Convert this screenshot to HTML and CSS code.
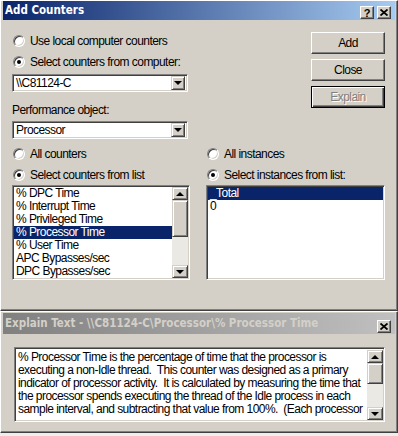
FILE: index.html
```html
<!DOCTYPE html>
<html lang="en">
<head>
    <meta charset="UTF-8">
    <title>Add Counters</title>
    <link rel="stylesheet" href="styles.css">
</head>
<body>
    <div class="window main">
        <div class="titlebar active">
            <span class="title">Add Counters</span>
            <span class="caption-btns">
                <span class="cap-btn">?</span>
                <span class="cap-btn"><svg width="8" height="7" viewBox="0 0 8 7"><path d="M0.5 0.5 L7.5 6.5 M7.5 0.5 L0.5 6.5" stroke="#000" stroke-width="1.8"/></svg></span>
            </span>
        </div>
        <div class="content">
            <div class="top">
                <div class="col-left">
                    <div class="radio-row"><span class="radio"></span>Use local computer counters</div>
                    <div class="radio-row"><span class="radio checked"></span>Select counters from computer:</div>
                    <div class="combo">
                        <span class="combo-text">\\C81124-C</span>
                        <span class="drop-btn"><i class="arrow-down"></i></span>
                    </div>
                    <div class="label">Performance object:</div>
                    <div class="combo combo-tight">
                        <span class="combo-text">Processor</span>
                        <span class="drop-btn"><i class="arrow-down"></i></span>
                    </div>
                </div>
                <div class="buttons">
                    <div class="btn">Add</div>
                    <div class="btn">Close</div>
                    <div class="btn default disabled">Explain</div>
                </div>
            </div>
            <div class="lists">
                <div class="list-col left">
                    <div class="radio-row"><span class="radio"></span>All counters</div>
                    <div class="radio-row"><span class="radio checked"></span>Select counters from list</div>
                    <div class="listbox">
                        <ul class="items">
                            <li>% DPC Time</li>
                            <li>% Interrupt Time</li>
                            <li>% Privileged Time</li>
                            <li class="selected">% Processor Time</li>
                            <li>% User Time</li>
                            <li>APC Bypasses/sec</li>
                            <li>DPC Bypasses/sec</li>
                        </ul>
                        <div class="vscroll">
                            <span class="sb-btn"><i class="arrow-up"></i></span>
                            <span class="sb-thumb"></span>
                            <span class="sb-track"></span>
                            <span class="sb-btn"><i class="arrow-down"></i></span>
                        </div>
                    </div>
                </div>
                <div class="list-col right">
                    <div class="radio-row"><span class="radio"></span>All instances</div>
                    <div class="radio-row"><span class="radio checked"></span>Select instances from list:</div>
                    <div class="listbox">
                        <ul class="items">
                            <li class="selected">_Total</li>
                            <li>0</li>
                        </ul>
                    </div>
                </div>
            </div>
        </div>
    </div>

    <div class="window explain">
        <div class="titlebar inactive">
            <span class="title">Explain Text - \\C81124-C\Processor\% Processor Time</span>
            <span class="caption-btns">
                <span class="cap-btn"><svg width="8" height="7" viewBox="0 0 8 7"><path d="M0.5 0.5 L7.5 6.5 M7.5 0.5 L0.5 6.5" stroke="#000" stroke-width="1.8"/></svg></span>
            </span>
        </div>
        <div class="textbox">
            <div class="text">% Processor Time is the percentage of time that the processor is
executing a non-Idle thread.  This counter was designed as a primary
indicator of processor activity.  It is calculated by measuring the time that
the processor spends executing the thread of the Idle process in each
sample interval, and subtracting that value from 100%.  (Each processor</div>
            <div class="vscroll">
                <span class="sb-btn"><i class="arrow-up"></i></span>
                <span class="sb-thumb short"></span>
                <span class="sb-track"></span>
                <span class="sb-btn"><i class="arrow-down"></i></span>
            </div>
        </div>
    </div>
</body>
</html>
```

FILE: styles.css
```css
* {
    box-sizing: border-box;
}
body {
    margin: 0;
    width: 398px;
    background: #efeeec;
    font-family: "Liberation Sans", Arial, sans-serif;
    font-size: 12px;
    letter-spacing: -0.55px;
    color: #000;
}
.window {
    background: #d4d0c8;
    border: 1px solid;
    border-color: #fff #404040 #404040 #fff;
    box-shadow: inset -1px -1px #808080;
    padding: 0 2px 2px 2px;
}
.main {
    height: 311px;
}
.explain {
    height: 122px;
    padding-top: 1px;
}

/* title bars */
.titlebar {
    height: 19px;
    display: flex;
    justify-content: space-between;
    align-items: flex-end;
    padding: 0 4px 1px 2px;
}
.active {
    background: linear-gradient(to right, #0a246a, #a6caf0);
    color: #fff;
}
.inactive {
    height: 21px;
    background: linear-gradient(to right, #808080, #c0c0c0);
    color: #d4d0c8;
}
.title {
    align-self: center;
    font-family: "DejaVu Sans Condensed", "DejaVu Sans", sans-serif;
    font-weight: bold;
    font-size: 11.5px;
    letter-spacing: 0;
    white-space: nowrap;
}
.caption-btns {
    display: flex;
    gap: 3px;
}
.cap-btn {
    width: 14px;
    height: 13px;
    display: flex;
    align-items: center;
    justify-content: center;
    background: #d4d0c8;
    border: 1px solid;
    border-color: #fff #404040 #404040 #fff;
    box-shadow: inset -1px -1px #808080;
    color: #000;
    font-weight: bold;
    font-size: 11px;
    letter-spacing: 0;
}

/* main content */
.content {
    padding: 10px 10px 0 9px;
}
.top {
    display: flex;
    justify-content: space-between;
}
.col-left {
    width: 176px;
}
.radio-row {
    height: 21px;
    display: flex;
    align-items: center;
    white-space: nowrap;
}
.radio {
    position: relative;
    flex-shrink: 0;
    width: 12px;
    height: 12px;
    margin: 0 5px 0 1px;
    border-radius: 50%;
    background: #fff;
    border: 1px solid;
    border-color: #808080 #fff #fff #808080;
    box-shadow: inset 1px 1px #404040, inset -1px -1px #d4d0c8;
}
.radio.checked::after {
    content: "";
    position: absolute;
    left: 3px;
    top: 3px;
    width: 4px;
    height: 4px;
    border-radius: 50%;
    background: #000;
}
.combo {
    height: 18px;
    margin-top: 2px;
    display: flex;
    align-items: center;
    justify-content: space-between;
    background: #fff;
    border: 1px solid;
    border-color: #808080 #fff #fff #808080;
    box-shadow: inset 1px 1px #404040, inset -1px -1px #d4d0c8;
    padding: 2px 2px 2px 3px;
}
.combo-tight {
    margin-top: 1px;
}
.drop-btn {
    width: 14px;
    height: 14px;
    display: flex;
    align-items: center;
    justify-content: center;
    background: #d4d0c8;
    border: 1px solid;
    border-color: #d4d0c8 #404040 #404040 #d4d0c8;
    box-shadow: inset 1px 1px #fff, inset -1px -1px #808080;
}
.arrow-down, .arrow-up {
    display: block;
    width: 0;
    height: 0;
    border-left: 4px solid transparent;
    border-right: 4px solid transparent;
}
.arrow-down {
    border-top: 4px solid #000;
}
.arrow-up {
    border-bottom: 4px solid #000;
}
.label {
    height: 20px;
    margin-top: 8px;
    line-height: 20px;
}

/* push buttons */
.buttons {
    width: 74px;
    margin-top: 2px;
    display: flex;
    flex-direction: column;
    gap: 5px;
}
.btn {
    height: 22px;
    display: flex;
    align-items: center;
    justify-content: center;
    border: 1px solid;
    border-color: #fff #404040 #404040 #fff;
    box-shadow: inset -1px -1px #808080;
}
.btn.default {
    border: 1px solid #000;
    box-shadow: inset 1px 1px #fff, inset -1px -1px #404040, inset -2px -2px #808080;
}
.btn.disabled {
    color: #808080;
    text-shadow: 1px 1px #fff;
}

/* lists */
.lists {
    display: flex;
    gap: 16px;
    margin-top: 4px;
}
.list-col.left {
    width: 178px;
}
.list-col.right {
    width: 179px;
}
.listbox {
    height: 95px;
    display: flex;
    background: #fff;
    border: 1px solid;
    border-color: #808080 #fff #fff #808080;
    box-shadow: inset 1px 1px #404040, inset -1px -1px #d4d0c8;
    padding: 1px;
}
.items {
    flex: 1;
    list-style: none;
    margin: 0;
    padding: 0;
}
.items li {
    height: 13px;
    line-height: 13px;
    padding-left: 2px;
    white-space: nowrap;
}
.items li.selected {
    background: #0a246a;
    color: #fff;
}
.vscroll {
    width: 16px;
    display: flex;
    flex-direction: column;
}
.sb-btn {
    height: 13px;
    display: flex;
    align-items: center;
    justify-content: center;
    background: #d4d0c8;
    border: 1px solid;
    border-color: #d4d0c8 #404040 #404040 #d4d0c8;
    box-shadow: inset 1px 1px #fff, inset -1px -1px #808080;
}
.sb-thumb {
    height: 37px;
    background: #d4d0c8;
    border: 1px solid;
    border-color: #d4d0c8 #404040 #404040 #d4d0c8;
    box-shadow: inset 1px 1px #fff, inset -1px -1px #808080;
}
.sb-thumb.short {
    height: 21px;
}
.sb-track {
    flex: 1;
    background: #ebe9e4;
}

/* explain box */
.textbox {
    width: 371px;
    height: 75px;
    margin: 13px 0 0 11px;
    display: flex;
    background: #fff;
    border: 1px solid;
    border-color: #808080 #fff #fff #808080;
    box-shadow: inset 1px 1px #404040, inset -1px -1px #d4d0c8;
    padding: 2px 1px 1px 2px;
}
.text {
    flex: 1;
    overflow: hidden;
    white-space: pre;
    line-height: 13px;
    padding: 1px 0 0 1px;
}
```
